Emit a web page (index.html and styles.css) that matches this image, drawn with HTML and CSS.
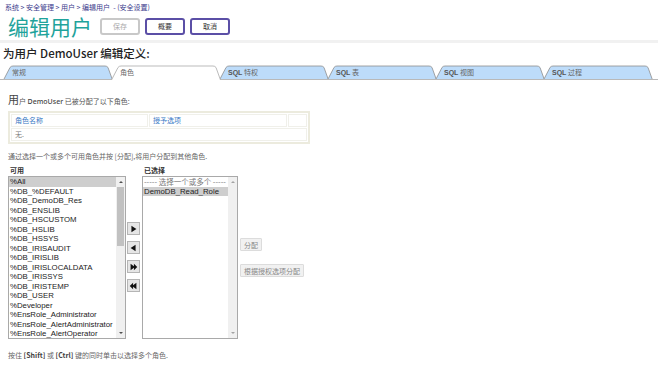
FILE: index.html
```html
<!DOCTYPE html>
<html lang="zh">
<head>
    <meta charset="UTF-8">
    <title>编辑用户</title>
    <link rel="stylesheet" href="styles.css">
</head>
<body>
    <header class="top">
        <div class="crumbs">系统 &gt; 安全管理 &gt; 用户 &gt; 编辑用户 &nbsp;- (安全设置)</div>
        <div class="title-row">
            <h1>编辑用户</h1>
            <button class="btn disabled">保存</button>
            <button class="btn">概要</button>
            <button class="btn">取消</button>
        </div>
    </header>

    <h2 class="subtitle">为用户 DemoUser 编辑定义:</h2>

    <nav class="tabs">
        <div class="tab"><svg viewBox="0 0 110 15" preserveAspectRatio="none"><path d="M0.5 15 L7 2.5 Q8 1 10 1 L102 1 Q104 1 105 2.5 L109.5 15"/></svg><span>常规</span></div>
        <div class="tab active"><svg viewBox="0 0 110 15" preserveAspectRatio="none"><path d="M0.5 15 L7 2.5 Q8 1 10 1 L102 1 Q104 1 105 2.5 L109.5 15"/></svg><span>角色</span></div>
        <div class="tab"><svg viewBox="0 0 110 15" preserveAspectRatio="none"><path d="M0.5 15 L7 2.5 Q8 1 10 1 L102 1 Q104 1 105 2.5 L109.5 15"/></svg><span><b>SQL</b> 特权</span></div>
        <div class="tab"><svg viewBox="0 0 110 15" preserveAspectRatio="none"><path d="M0.5 15 L7 2.5 Q8 1 10 1 L102 1 Q104 1 105 2.5 L109.5 15"/></svg><span><b>SQL</b> 表</span></div>
        <div class="tab"><svg viewBox="0 0 110 15" preserveAspectRatio="none"><path d="M0.5 15 L7 2.5 Q8 1 10 1 L102 1 Q104 1 105 2.5 L109.5 15"/></svg><span><b>SQL</b> 视图</span></div>
        <div class="tab"><svg viewBox="0 0 110 15" preserveAspectRatio="none"><path d="M0.5 15 L7 2.5 Q8 1 10 1 L102 1 Q104 1 105 2.5 L109.5 15"/></svg><span><b>SQL</b> 过程</span></div>
    </nav>

    <main class="content">
        <p class="assigned"><span class="big">用</span>户 <b>DemoUser</b> 已被分配了以下角色:</p>

        <div class="roles-box">
            <table class="roles">
                <tr>
                    <th class="c1">角色名称</th>
                    <th class="c2">授予选项</th>
                    <th class="c3"></th>
                </tr>
                <tr>
                    <td colspan="3">无.</td>
                </tr>
            </table>
        </div>

        <p class="hint">通过选择一个或多个可用角色并按 [分配],将用户分配到其他角色.</p>

        <div class="picker">
            <div class="col">
                <div class="label">可用</div>
                <div class="listbox left">
                    <ul>
                        <li class="sel">%All</li>
                        <li>%DB_%DEFAULT</li>
                        <li>%DB_DemoDB_Res</li>
                        <li>%DB_ENSLIB</li>
                        <li>%DB_HSCUSTOM</li>
                        <li>%DB_HSLIB</li>
                        <li>%DB_HSSYS</li>
                        <li>%DB_IRISAUDIT</li>
                        <li>%DB_IRISLIB</li>
                        <li>%DB_IRISLOCALDATA</li>
                        <li>%DB_IRISSYS</li>
                        <li>%DB_IRISTEMP</li>
                        <li>%DB_USER</li>
                        <li>%Developer</li>
                        <li>%EnsRole_Administrator</li>
                        <li>%EnsRole_AlertAdministrator</li>
                        <li>%EnsRole_AlertOperator</li>
                    </ul>
                    <div class="scrollbar">
                        <span class="arrow up"></span>
                        <div class="track"><div class="thumb"></div></div>
                        <span class="arrow down"></span>
                    </div>
                </div>
            </div>

            <div class="movers">
                <button class="mv"><svg viewBox="0 0 13 12"><path d="M4 2 L10 6 L4 10 Z"/></svg></button>
                <button class="mv"><svg viewBox="0 0 13 12"><path d="M9 2 L3 6 L9 10 Z"/></svg></button>
                <button class="mv"><svg viewBox="0 0 13 12"><path d="M3 2 L3 10 L7 7 L7 10 L11 6 L7 2 L7 5 Z"/></svg></button>
                <button class="mv"><svg viewBox="0 0 13 12"><path d="M10 2 L10 10 L6 7 L6 10 L2 6 L6 2 L6 5 Z"/></svg></button>
            </div>

            <div class="col">
                <div class="label">已选择</div>
                <div class="listbox right">
                    <ul>
                        <li class="placeholder">----- 选择一个或多个 -----</li>
                        <li class="sel">DemoDB_Read_Role</li>
                    </ul>
                    <div class="scrollbar">
                        <span class="arrow up"></span>
                        <div class="track"></div>
                        <span class="arrow down"></span>
                    </div>
                </div>
            </div>

            <div class="actions">
                <button class="act">分配</button>
                <button class="act">根据授权选项分配</button>
            </div>
        </div>

        <p class="footnote">按住 <b>[Shift]</b> 或 <b>[Ctrl]</b> 键的同时单击以选择多个角色.</p>
    </main>
</body>
</html>
```

FILE: styles.css
```css
* {
    margin: 0;
    padding: 0;
    box-sizing: border-box;
}

body {
    font-family: "Noto Sans CJK SC", "Noto Sans", sans-serif;
    background: #fff;
    color: #333;
    width: 658px;
    height: 366px;
    overflow: hidden;
}

.top {
    height: 43px;
    padding: 2px 5px 0;
    border-bottom: 3px solid #f1f1f1;
}

.crumbs {
    font-size: 7px;
    line-height: 10px;
    color: #3b3a8c;
}

.title-row {
    display: flex;
    align-items: center;
    gap: 5px;
    margin-top: 1px;
    padding-left: 3px;
}

.title-row h1 {
    font-size: 21px;
    font-weight: 400;
    color: #1fa39b;
    line-height: 26px;
    margin-right: 3px;
}

.btn {
    width: 40px;
    height: 17px;
    font-family: inherit;
    font-size: 7px;
    color: #333;
    background: #fff;
    border: 2px solid #5b4fa6;
    border-radius: 3px;
}

.btn.disabled {
    border-color: #c8c8c8;
    color: #aaa;
}

.subtitle {
    font-size: 11.5px;
    font-weight: 500;
    color: #222;
    margin: 3px 0 0 3px;
    line-height: 15px;
}

.tabs {
    display: flex;
    margin: 4px 0 0 3px;
    height: 15px;
    position: relative;
}

.tabs::after {
    content: "";
    position: absolute;
    left: -3px;
    right: 0;
    bottom: 0;
    height: 1px;
    background: #b9b9b9;
}

.tab {
    position: relative;
    width: 110px;
    height: 15px;
    margin-right: -2px;
    font-size: 7px;
    line-height: 15px;
    color: #666;
}

.tab svg {
    position: absolute;
    left: 0;
    top: 0;
    width: 100%;
    height: 100%;
}

.tab path {
    fill: #bddcfa;
    stroke: #8e8e8e;
    stroke-width: 0.8;
}

.tab.active path {
    fill: #fff;
    stroke: #aaa;
}

.tab.active {
    z-index: 2;
}

.tab span {
    position: relative;
    padding-left: 9px;
}

.tab b {
    font-family: "Liberation Sans", Arial, sans-serif;
    color: #555;
}

.content {
    padding: 13px 0 0 8px;
}

.assigned {
    font-size: 7px;
    color: #555;
    line-height: 12px;
}

.assigned .big {
    font-size: 11px;
    color: #444;
}

.assigned b {
    font-family: "Noto Sans", sans-serif;
    font-weight: 500;
    color: #444;
}

.roles-box {
    width: 302px;
    margin-top: 3px;
    border: 2px solid #ecebde;
    padding: 0;
}

.roles {
    width: 100%;
    border-collapse: separate;
    border-spacing: 1px;
    font-size: 7px;
    line-height: 9px;
}

.roles th,
.roles td {
    height: 13px;
    text-align: left;
    font-weight: 400;
    padding: 0 0 0 3px;
    border: 1px solid #f0f0ea;
}

.roles th {
    color: #3677c4;
}

.roles .c1 { width: 137px; }
.roles .c3 { width: 19px; }

.roles td {
    color: #777;
}

.hint {
    font-size: 7px;
    color: #666;
    margin-top: 7px;
    line-height: 10px;
}

.picker {
    display: flex;
    align-items: flex-start;
    margin-top: 3px;
}

.label {
    font-size: 7px;
    font-weight: 700;
    color: #333;
    line-height: 12px;
    padding-left: 2px;
}

.listbox {
    display: flex;
    height: 163px;
    border: 1px solid #a9a9a9;
    background: #fff;
}

.listbox.left { width: 118px; }
.listbox.right { width: 96px; }

.listbox ul {
    list-style: none;
    flex: 1;
    overflow: hidden;
    font-family: "Liberation Sans", Arial, sans-serif;
    font-size: 7.8px;
    color: #222;
}

.listbox li {
    height: 9.5px;
    line-height: 9.5px;
    padding-left: 1px;
    white-space: nowrap;
}

.listbox li.sel {
    background: #cecece;
}

.listbox li.placeholder {
    font-family: "Noto Sans CJK SC", sans-serif;
    font-size: 7.5px;
    color: #777;
}

.scrollbar {
    width: 9px;
    display: flex;
    flex-direction: column;
    background: #f0f0f0;
}

.scrollbar .track {
    flex: 1;
    padding: 0 1px;
}

.scrollbar .thumb {
    height: 59px;
    background: #c1c1c1;
}

.arrow {
    height: 10px;
    position: relative;
}

.arrow::after {
    content: "";
    position: absolute;
    left: 2.5px;
    border-left: 2px solid transparent;
    border-right: 2px solid transparent;
}

.arrow.up::after {
    top: 4px;
    border-bottom: 2px solid #505050;
}

.arrow.down::after {
    top: 4px;
    border-top: 2px solid #505050;
}

.right .arrow.up::after { border-bottom-color: #a3a3a3; }
.right .arrow.down::after { border-top-color: #a3a3a3; }

.movers {
    display: flex;
    flex-direction: column;
    gap: 6px;
    margin: 58px 2px 0 1px;
}

.mv {
    width: 13px;
    height: 13px;
    background: #e6e6e6;
    border: 1px solid #b5b5b5;
    display: flex;
    align-items: center;
    justify-content: center;
}

.mv svg {
    width: 11px;
    height: 10px;
    fill: #111;
}

.actions {
    display: flex;
    flex-direction: column;
    align-items: flex-start;
    gap: 13px;
    margin: 74px 0 0 2px;
}

.act {
    height: 13px;
    padding: 0 3px;
    font-family: inherit;
    font-size: 7px;
    color: #888;
    background: #f1f1f1;
    border: 1px solid #dcdcdc;
    border-radius: 1px;
}

.footnote {
    font-size: 7px;
    color: #666;
    margin-top: 11px;
    line-height: 10px;
}

.footnote b {
    font-weight: 700;
    color: #444;
}
```
